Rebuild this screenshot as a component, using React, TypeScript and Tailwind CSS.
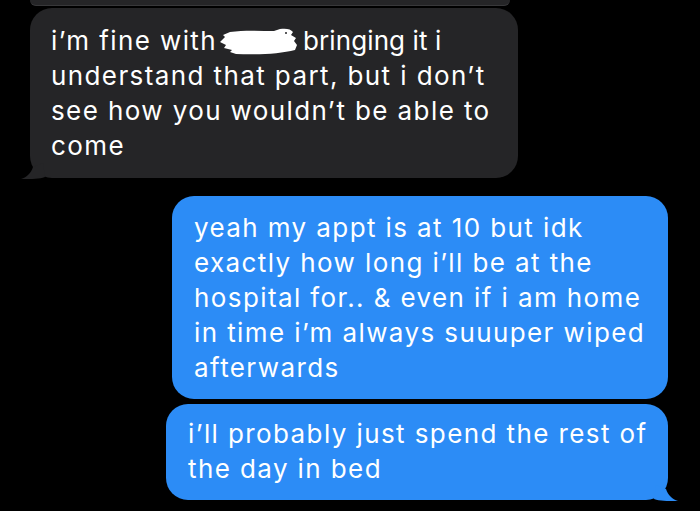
import React from "react";

function Redaction() {
  return (
    <svg
      width="78"
      height="28"
      viewBox="0 0 78 28"
      className="inline-block align-[-6px] ml-[3px] mr-[5px]"
    >
      <path
        d="M0 14 L5 9 L3 7 L10 4 C24 2 40 3 54 3 L60 1 C66 0 71 1 73 4 L71 7 L76 10 L74 13 L77 17 L75 22 C60 26 36 27 16 26 L10 24 L12 22 L4 20 L6 17 Z"
        fill="#ffffff"
      />
      <circle cx="66" cy="5" r="1" fill="#252527" />
    </svg>
  );
}

function App() {
  return (
    <div
      className="w-[700px] h-[511px] bg-black overflow-hidden flex flex-col text-white"
      style={{ fontFamily: "Inter, 'Liberation Sans', sans-serif" }}
    >
      <div className="ml-[30px] w-[480px] h-[6px] bg-[#252527] rounded-b-[18px] border-b border-[#38383a]" />

      <div className="relative mt-[2px] ml-[30px] w-[488px] bg-[#252527] rounded-[22px] pl-[21px] py-[15px] text-[26px] leading-[35px] tracking-[1.4px]">
        <div className="whitespace-nowrap">
          i’m fine with
          <Redaction />
          <span className="tracking-[0.1px]">bringing it i</span>
        </div>
        <div className="whitespace-nowrap">understand that part, but i don’t</div>
        <div className="whitespace-nowrap">see how you wouldn’t be able to</div>
        <div className="whitespace-nowrap">come</div>
        <svg
          width="24"
          height="16"
          viewBox="0 0 24 16"
          className="absolute left-[-9px] bottom-[-1px]"
        >
          <path d="M0 16 C6 14 10 10 12 4 L22 0 L24 14 C18 16 12 16 0 16 Z" fill="#252527" />
        </svg>
      </div>

      <div className="relative mt-[18px] self-end mr-[32px] w-[496px] bg-[#2c8cf6] rounded-[22px] pl-[22px] py-[14px] text-[26px] leading-[35px] tracking-[1.4px]">
        <div className="whitespace-nowrap">yeah my appt is at 10 but idk</div>
        <div className="whitespace-nowrap">exactly how long i’ll be at the</div>
        <div className="whitespace-nowrap">hospital for.. &amp; even if i am home</div>
        <div className="whitespace-nowrap">in time i’m always suuuper wiped</div>
        <div className="whitespace-nowrap">afterwards</div>
      </div>

      <div className="relative mt-[5px] self-end mr-[32px] w-[502px] bg-[#2c8cf6] rounded-[22px] pl-[22px] pt-[12px] pb-[14px] text-[26px] leading-[35px] tracking-[1.4px]">
        <div className="whitespace-nowrap">i’ll probably just spend the rest of</div>
        <div className="whitespace-nowrap">the day in bed</div>
        <svg
          width="24"
          height="16"
          viewBox="0 0 24 16"
          className="absolute right-[-10px] bottom-[-1px]"
        >
          <path d="M24 16 C18 14 14 10 12 4 L2 0 L0 14 C6 16 12 16 24 16 Z" fill="#2c8cf6" />
        </svg>
      </div>
    </div>
  );
}

export default App;
